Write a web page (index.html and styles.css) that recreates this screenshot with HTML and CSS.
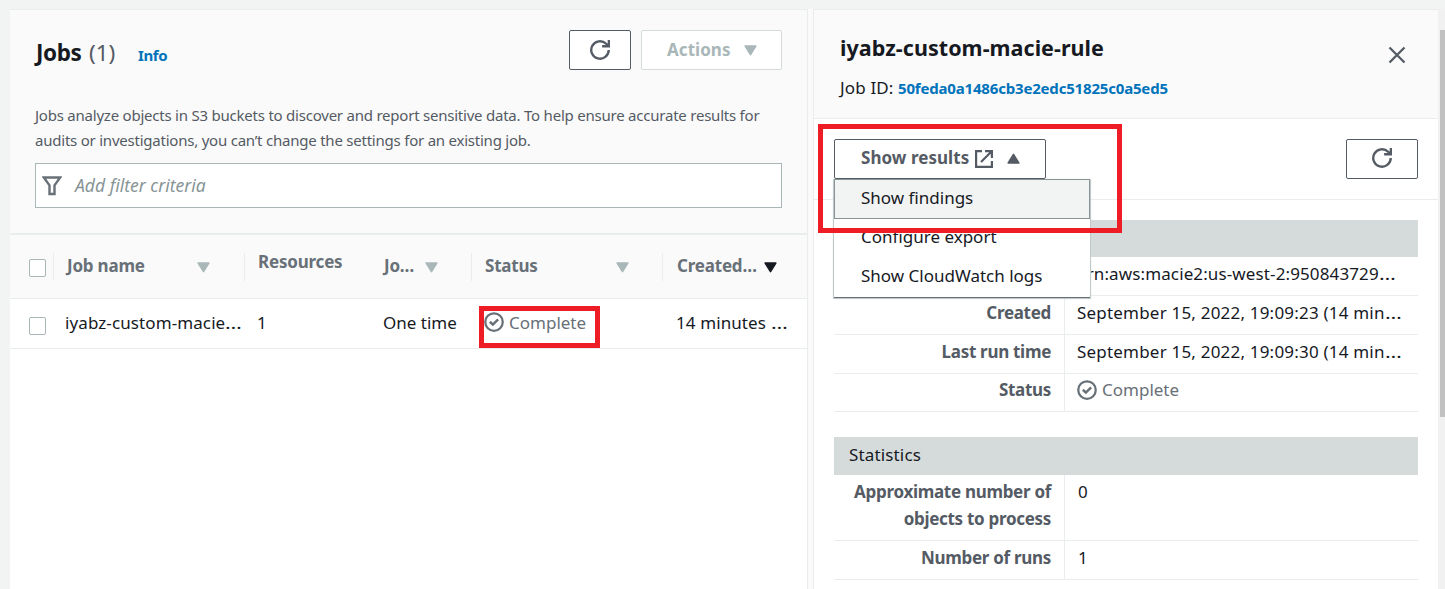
FILE: index.html
```html
<!DOCTYPE html>
<html lang="en">
<head>
<meta charset="utf-8">
<title>Macie jobs</title>
<link rel="stylesheet" href="styles.css">
</head>
<body>
<svg class="defs" width="0" height="0">
  <symbol id="refresh" viewBox="0 0 16 16"><path d="M9.7 5h5.4V0M15 8a7 7 0 1 1-2.1-5l2.1 2" fill="none" stroke="currentColor" stroke-width="1.9" stroke-linejoin="miter"/></symbol>
  <symbol id="check" viewBox="0 0 16 16"><circle cx="8" cy="8" r="7" fill="none" stroke="currentColor" stroke-width="1.8"/><path d="M4.7 7.8l2.4 2.3 4.2-4.2" fill="none" stroke="currentColor" stroke-width="2"/></symbol>
  <symbol id="down" viewBox="0 0 13 11"><path d="M1.2 1h10.6L6.5 9.6z" fill="currentColor" stroke="currentColor" stroke-width="1.6" stroke-linejoin="round"/></symbol>
</svg>
<div class="app">
  <section class="jobs">
    <header class="jobs-head">
      <div class="title-row">
        <h1>Jobs <span class="count">(1)</span></h1>
        <a class="info">Info</a>
        <div class="actions">
          <button class="btn refresh"><svg class="i21"><use href="#refresh"/></svg></button>
          <button class="btn disabled"><span class="act">Actions</span><svg class="tri"><use href="#down"/></svg></button>
        </div>
      </div>
      <p class="desc">Jobs analyze objects in S3 buckets to discover and report sensitive data. To help ensure accurate results for<br>audits or investigations, you can’t change the settings for an existing job.</p>
      <div class="filter">
        <svg class="funnel" viewBox="0 0 20 20"><path d="M1.8 1.5h16.4L12.5 9.3V18h-5V9.3z" fill="none" stroke="currentColor" stroke-width="2.4"/></svg>
        <span class="ph">Add filter criteria</span>
      </div>
    </header>
    <div class="grid thead">
      <div class="cell"><i class="box"></i></div>
      <div class="cell c-name"><span class="t-name">Job name</span><svg class="tri"><use href="#down"/></svg></div>
      <div class="cell c-res"><span class="t-res">Resources</span></div>
      <div class="cell c-type"><span class="t-jo">Jo…</span><svg class="tri"><use href="#down"/></svg></div>
      <div class="cell c-status"><span class="t-status">Status</span><svg class="tri"><use href="#down"/></svg></div>
      <div class="cell c-created"><span class="t-created">Created…</span><svg class="tri dark"><use href="#down"/></svg></div>
    </div>
    <div class="grid trow">
      <div class="cell"><i class="box"></i></div>
      <div class="cell r-name"><span class="v-name">iyabz-custom-macie<span class="dots">…</span></span></div>
      <div class="cell r-res">1</div>
      <div class="cell r-type">One time</div>
      <div class="cell r-status"><svg class="i21"><use href="#check"/></svg><span class="complete">Complete</span><i class="mark mark-status"></i></div>
      <div class="cell r-created"><span class="v-created">14 minutes <span class="dots">…</span></span></div>
    </div>
  </section>
  <section class="detail">
    <header class="detail-head">
      <div>
        <h2>iyabz-custom-macie-rule</h2>
        <div class="jobid"><span class="lbl">Job ID:</span> <a class="hash">50feda0a1486cb3e2edc51825c0a5ed5</a></div>
      </div>
      <svg class="close" viewBox="0 0 18 18"><path d="M1.5 1.5l15 15M16.5 1.5l-15 15" stroke="currentColor" stroke-width="2.3"/></svg>
    </header>
    <div class="toolbar">
      <div class="drop">
        <button class="btn results"><span class="t-results">Show results</span><svg class="ext" viewBox="0 0 18 18"><path d="M7 1.1H1.1v15.8h15.8V11M10 1.1h6.9V8M16.5 1.5L6 12" fill="none" stroke="currentColor" stroke-width="2.2"/></svg><svg class="tri up"><use href="#down"/></svg></button>
        <div class="menu">
          <div class="item active">Show findings</div>
          <div class="item">Configure export</div>
          <div class="item">Show CloudWatch logs</div>
        </div>
        <i class="mark mark-menu"></i>
      </div>
      <button class="btn refresh wide"><svg class="i21"><use href="#refresh"/></svg></button>
    </div>
    <div class="body">
      <div class="band"></div>
      <dl class="row"><dt></dt><dd class="arn">arn:aws:macie2:us-west-2:950843729<span class="dots">…</span></dd></dl>
      <dl class="row"><dt>Created</dt><dd class="date">September 15, 2022, 19:09:23 (14 min<span class="dots">…</span></dd></dl>
      <dl class="row"><dt>Last run time</dt><dd class="date">September 15, 2022, 19:09:30 (14 min<span class="dots">…</span></dd></dl>
      <dl class="row status"><dt>Status</dt><dd><svg class="i21"><use href="#check"/></svg><span class="complete">Complete</span></dd></dl>
      <div class="band stats">Statistics</div>
      <dl class="row"><dt>Approximate number of<br>objects to process</dt><dd class="num">0</dd></dl>
      <dl class="row"><dt>Number of runs</dt><dd class="num">1</dd></dl>
    </div>
  </section>
  <div class="scroll"><div class="thumb"></div></div>
</div>
</body>
</html>
```
FILE: styles.css
```css
* { box-sizing: border-box; }
html, body { height: 100%; }
body { margin: 0; background: #f2f3f3; color: #16191f; font: 17px/27px "Noto Sans", "Open Sans", sans-serif; overflow: hidden; }
h1, h2, p, dl, dd { margin: 0; }
svg { flex: none; display: block; }
.defs { position: absolute; }
.app { display: flex; height: 589px; padding: 9px 0 0 10px; }
.jobs { flex: none; width: 798px; background: #fff; border-top: 1px solid #eaeded; border-right: 1px solid #eaeded; white-space: nowrap; }
.jobs-head { height: 225px; background: #fafafa; border-bottom: 2px solid #eaeded; padding: 20px 25px 0; }
.title-row { display: flex; height: 40px; }
h1 { font-size: 22.5px; line-height: 46px; font-weight: 700; letter-spacing: -0.4px; width: 102px; margin-left: 1px; word-spacing: 2px; }
.count { font-weight: 400; color: #545b64; letter-spacing: 0; }
.info { font-size: 15px; line-height: 50px; font-weight: 700; letter-spacing: -0.4px; color: #0073bb; }
.actions { display: flex; gap: 10px; margin-left: auto; }
.btn { display: flex; align-items: center; height: 40px; background: #fff; border: 1px solid #545b64; border-radius: 2px; color: #545b64; font: 700 17px/27px "Noto Sans", sans-serif; letter-spacing: 0.05px; padding: 0; }
.refresh { width: 62px; justify-content: center; }
.wide { width: 72px; }
.wide .i21 { margin-top: -2px; }
.i21 { width: 20px; height: 20px; }
.disabled { width: 141px; border-color: #d5dbdb; color: #aab7b8; padding-left: 25px; }
.act { width: 77px; text-align: left; margin-top: -1px; }
.tri { width: 13px; height: 11px; color: #aab7b8; }
.desc { margin-top: 33px; font-size: 15px; line-height: 25px; letter-spacing: -0.225px; color: #545b64; }
.filter { display: flex; align-items: center; height: 45px; margin-top: 10px; border: 1px solid #aab7b8; background: #fff; padding-left: 6px; }
.funnel { width: 20px; height: 20px; margin-top: 1px; color: #687078; }
.ph { margin-left: 13px; font-style: italic; font-size: 17.5px; color: #879596; }
.grid { display: grid; grid-template-columns: 43px 191px 125px 102px 191px 1fr; border-bottom: 1px solid #eaeded; }
.thead { height: 64px; background: #fafafa; color: #687078; font-weight: 700; letter-spacing: -0.2px; }
.trow { height: 50px; }
.cell { display: flex; position: relative; min-width: 0; }
.box { width: 17px; height: 18px; border: 1px solid #aab7b8; border-radius: 2px; background: #fff; margin: 24px 0 0 19px; }
.trow .box { margin-top: 18px; }
.thead .cell:not(:first-child) { padding-top: 17px; }
.thead .tri { margin-top: 10px; }
.c-name::before, .c-res::before, .c-status::before, .c-created::before { content: ""; position: absolute; left: 0; top: 18px; width: 1px; height: 28px; background: #eaeded; }
.c-name { padding-left: 14px; }
.t-name { width: 130px; }
.c-res { padding-left: 14px; }
.c-res .t-res { margin-top: -4px; }
.c-type { padding-left: 15px; }
.t-jo { width: 41px; }
.c-status { padding-left: 14px; }
.t-status { width: 131px; }
.c-created { padding-left: 15px; }
.t-created { width: 87px; }
.dark { color: #16191f; }
.trow .cell:not(:first-child) { padding-top: 10px; }
.r-name { padding-left: 12px; }
.v-name { letter-spacing: 0.1px; }
.dots { display: inline-block; transform: scaleX(1.25); transform-origin: 0 50%; }
.r-type, .r-created { padding-left: 14px; }
.r-res { padding-left: 13px; }
.r-status { padding-left: 13px; }
.r-status .i21 { margin-top: 3px; }
.r-status .i21, .status .i21 { color: #687078; }
.complete { color: #687078; margin-left: 5px; }
.v-created { letter-spacing: 0.1px; }
.mark { position: absolute; border: 5px solid #ee1c24; }
.mark-status { left: 8px; top: 7px; width: 121px; height: 42px; }
.detail { flex: none; width: 625px; margin-left: 5px; background: #fff; border-top: 1px solid #eaeded; border-left: 1px solid #eaeded; white-space: nowrap; box-shadow: -5px 0 #fafafa; }
.detail-head { display: flex; justify-content: space-between; height: 109px; background: #fafafa; border-bottom: 1px solid #eaeded; padding: 24px 32px 0 26px; }
h2 { font-size: 21.5px; line-height: 28px; font-weight: 700; letter-spacing: 0.05px; }
.jobid { margin-top: 12px; }
.lbl { letter-spacing: 0.15px; }
.hash { font-size: 15px; font-weight: 700; letter-spacing: -0.18px; color: #0073bb; }
.close { width: 18px; height: 18px; margin-top: 12px; color: #545b64; }
.toolbar { display: flex; justify-content: space-between; height: 81px; border-bottom: 1px solid #eaeded; padding: 20px 20px 0 20px; }
.drop { position: relative; z-index: 2; }
.results { position: relative; z-index: 1; width: 212px; padding-left: 26px; }
.t-results { width: 114px; text-align: left; margin-top: -3px; }
.ext { width: 18px; height: 18px; }
.up { transform: rotate(180deg); color: #545b64; margin-left: 14px; margin-top: -1px; }
.menu { position: absolute; left: 0; top: 40px; width: 256px; height: 118px; background: #fff; box-shadow: 0 1px 1px #687078, 0 1px 1px 1px #d5dbdb; color: #16191f; }
.item { height: 39px; padding: 4px 0 0 27px; }
.active { height: 40px; width: 256px; background: #f2f3f3; border: 1px solid #879596; padding-left: 26px; }
.mark-menu { z-index: 2; left: -16px; top: -15px; width: 304px; height: 109px; }
.body { padding: 20px 20px 0; }
.band { background: #d5dbdb; height: 37px; }
.stats { height: 38px; margin-top: 25px; padding: 4px 0 0 15px; letter-spacing: 0.15px; }
.row { display: grid; grid-template-columns: 230px 1fr; border-bottom: 1px solid #eaeded; }
dt { padding: 3px 13px 8px 0; text-align: right; font-weight: 700; letter-spacing: -0.3px; color: #545b64; }
dd { padding: 3px 0 8px 12px; border-left: 1px solid #eaeded; display: flex; }
.num { padding-left: 13px; }
.date { letter-spacing: 0.2px; }
.arn { letter-spacing: 0.12px; }
.status dt, .status dd { padding-top: 2px; }
.status .i21 { margin: 4px 0 0; }
.scroll { flex: none; width: 7px; background: #f1f1f1; padding: 21px 0 0 2px; }
.thumb { height: 387px; background: #c1c1c1; }
```
